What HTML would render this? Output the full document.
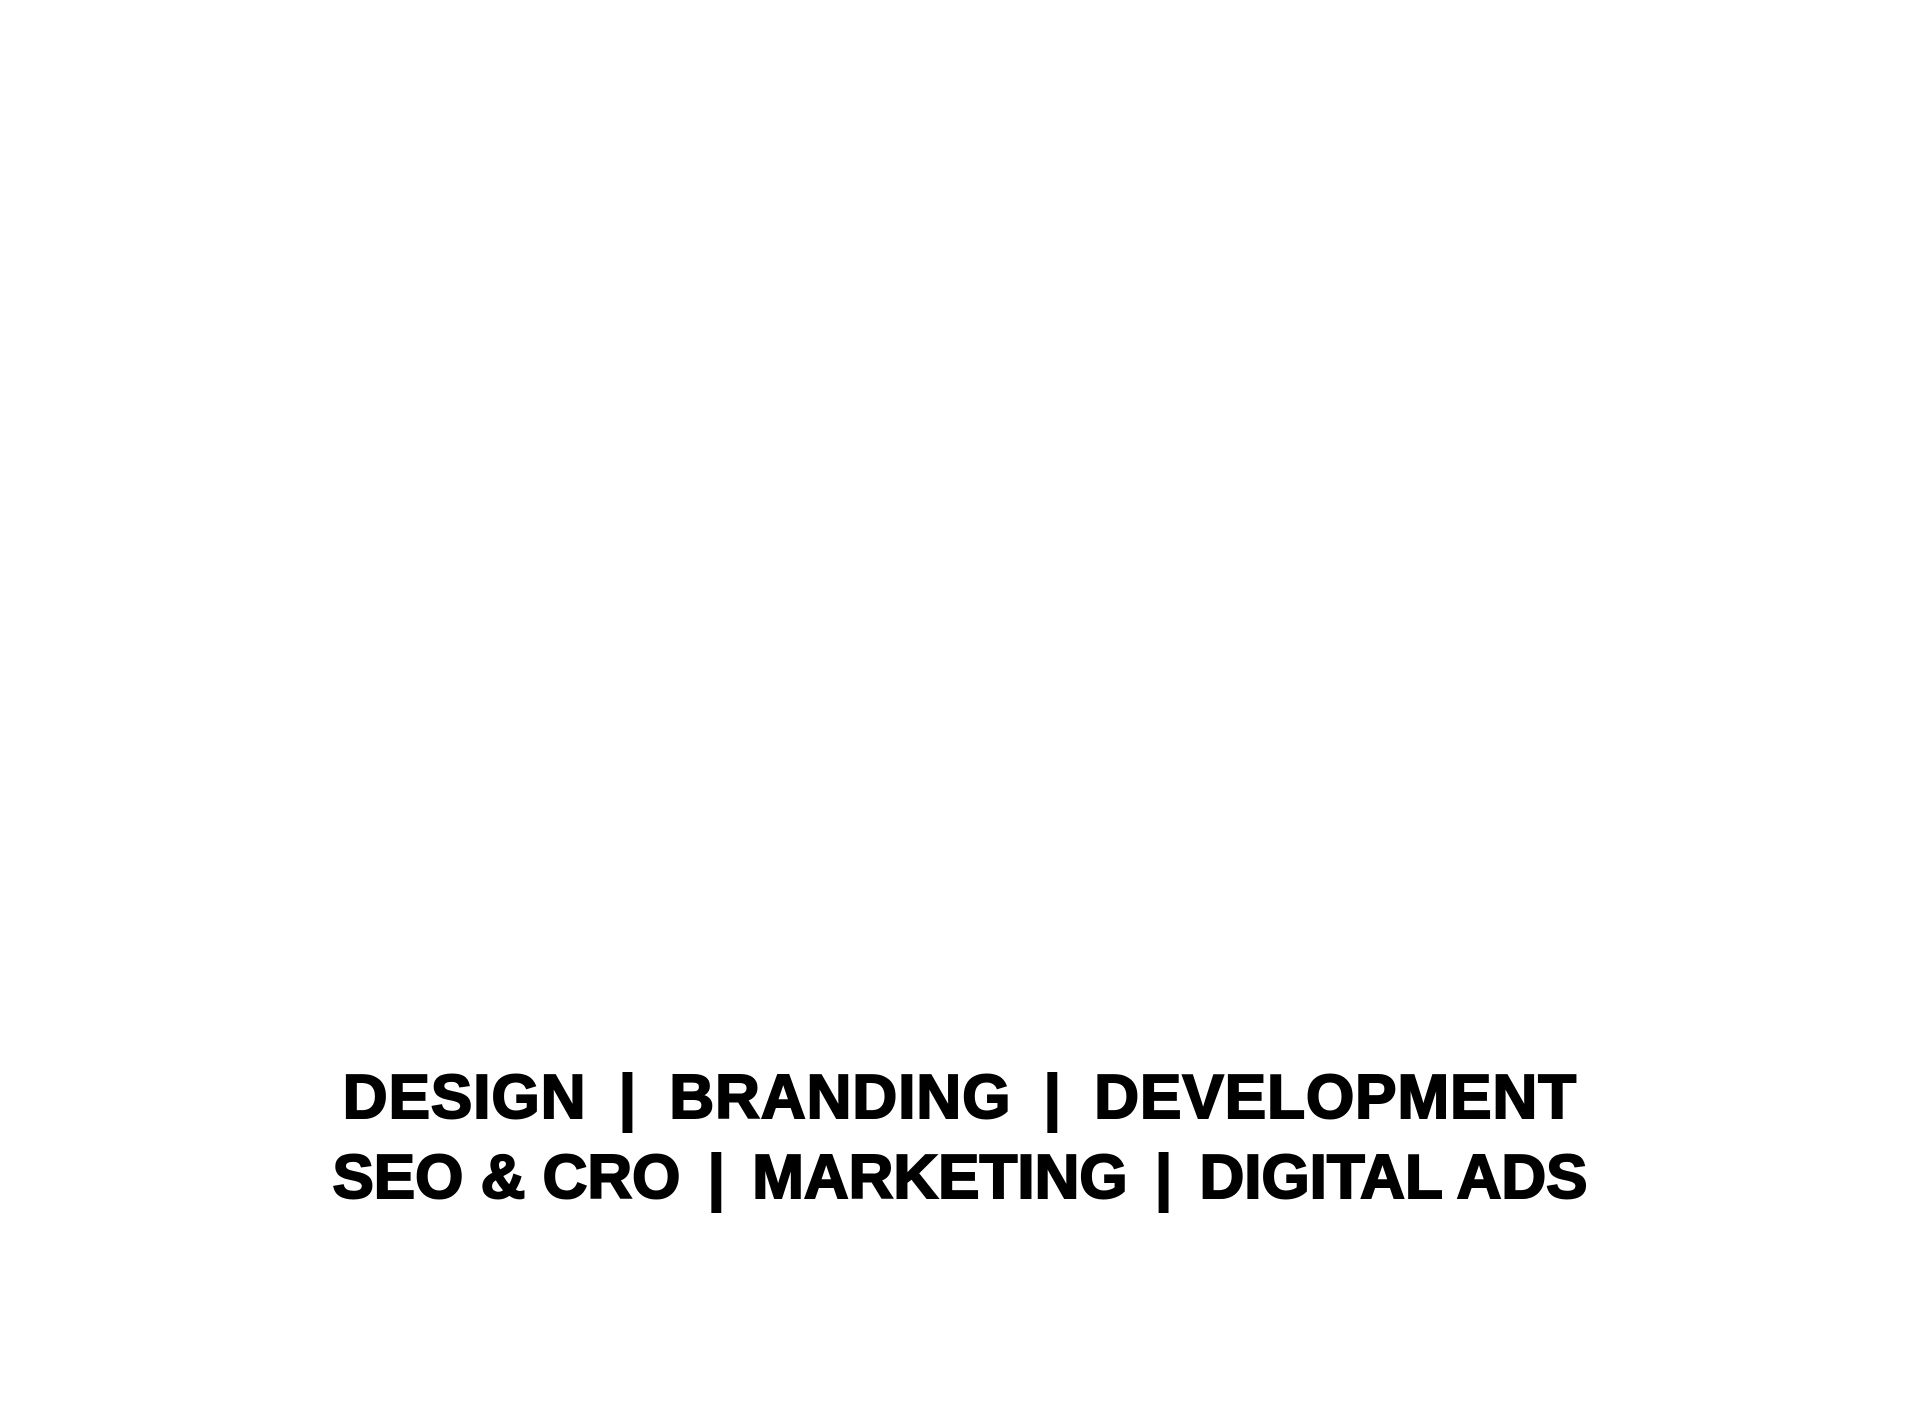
<!DOCTYPE html>
<html><head><meta charset="utf-8"><style>
html,body{margin:0;padding:0;background:#fff;width:1920px;height:1418px;overflow:hidden}
.l{position:absolute;left:0;width:1920px;text-align:center;font-family:"Liberation Sans",sans-serif;font-weight:700;font-size:62px;line-height:62px;color:#000;white-space:pre;-webkit-text-stroke:2px #000}
.p{display:inline-block}
</style></head><body>
<div class="l" style="top:1067px;letter-spacing:1px">DESIGN <span class="p" style="margin:0 14px">|</span> BRANDING <span class="p" style="margin:0 14px">|</span> DEVELOPMENT</div>
<div class="l" style="top:1147px;letter-spacing:0px">SEO &amp; CRO <span class="p" style="margin:0 10px">|</span> MARKETING <span class="p" style="margin:0 10px">|</span> DIGITAL ADS</div>
</body></html>
